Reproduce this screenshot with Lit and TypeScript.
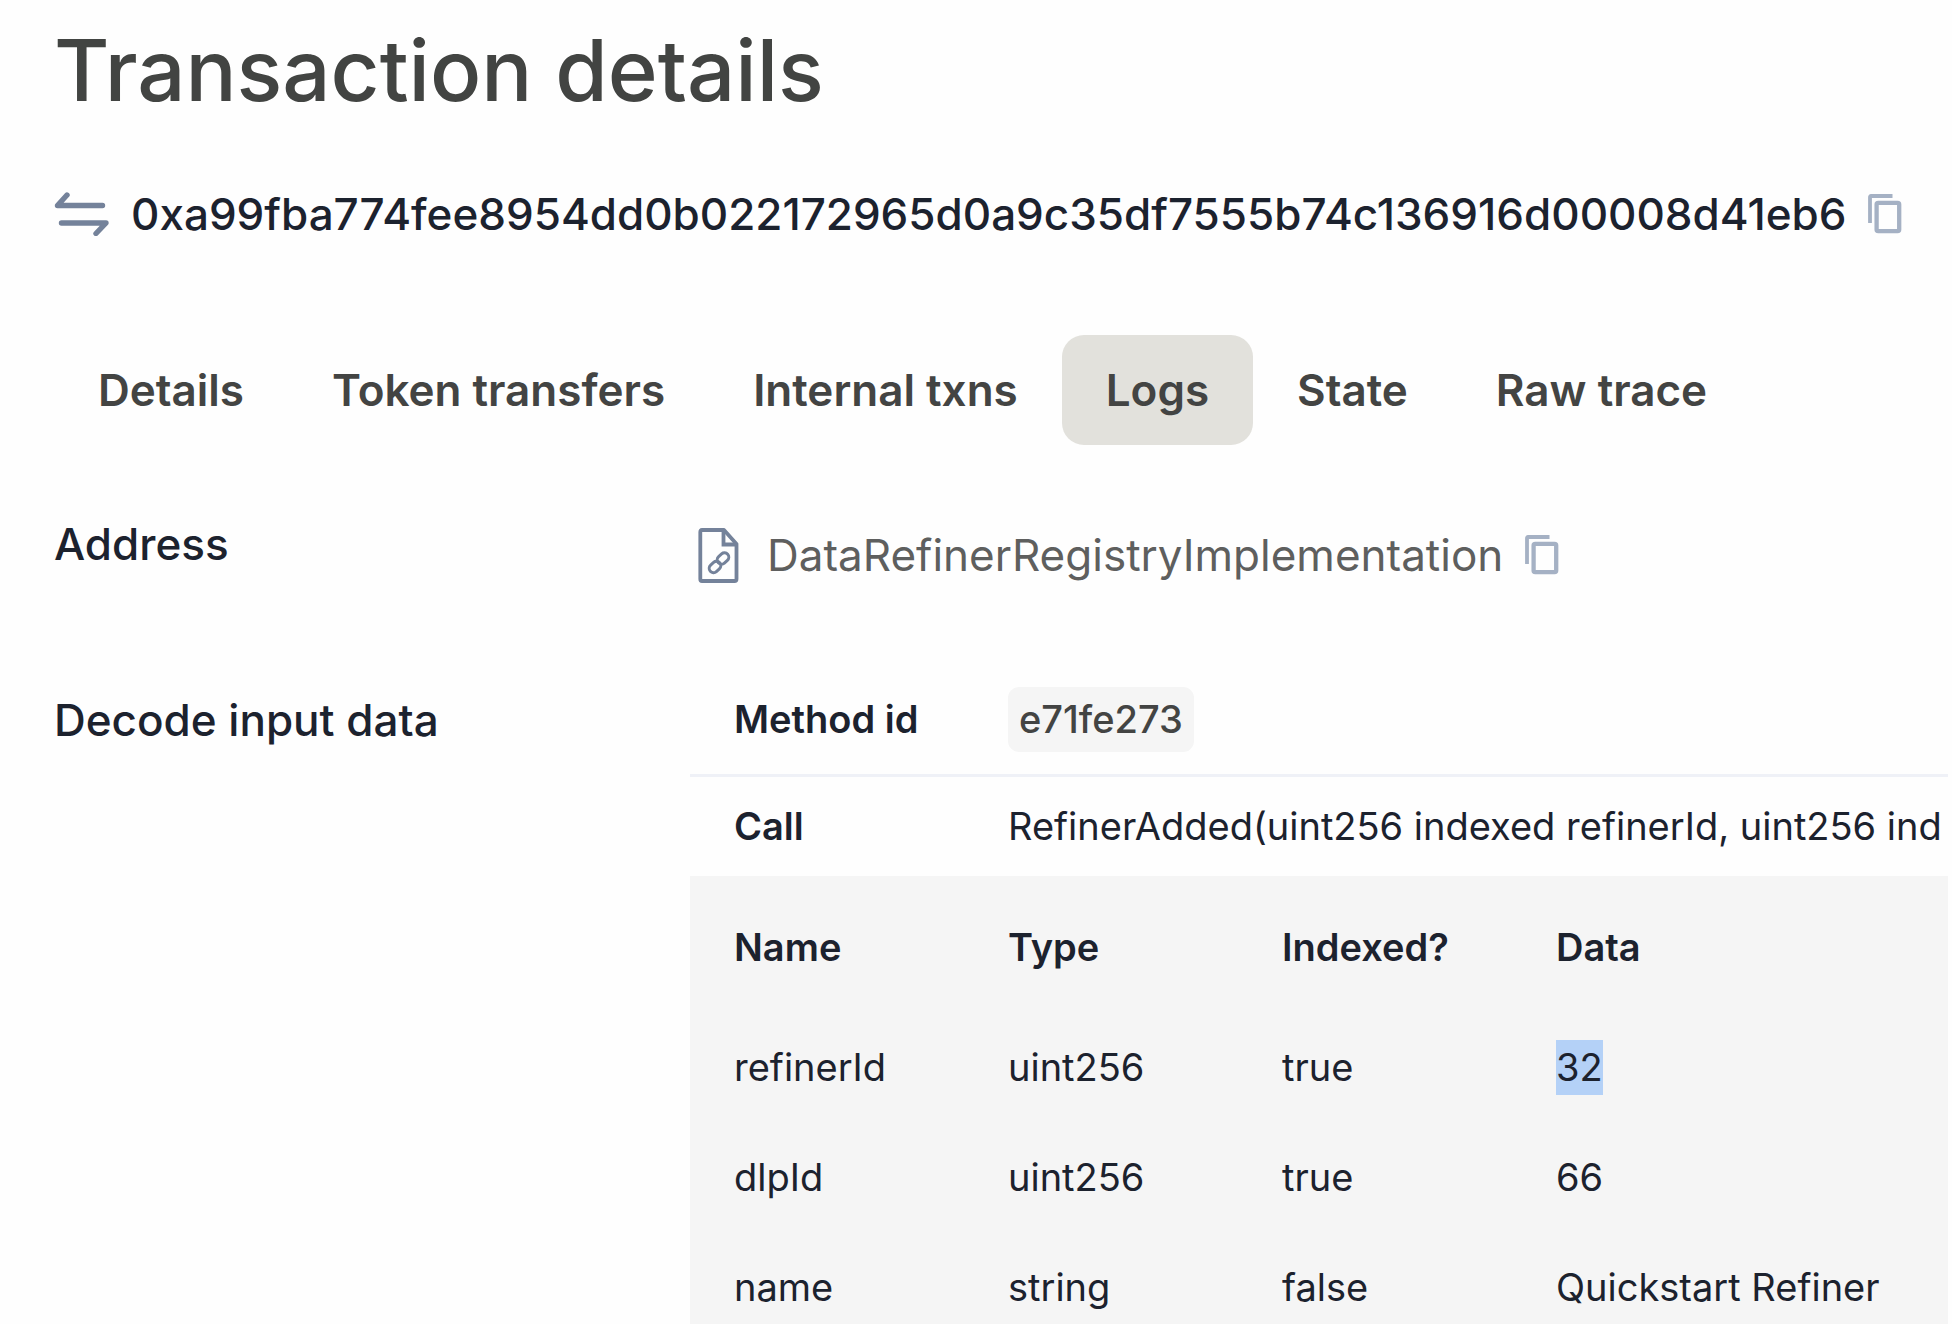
import { LitElement, html, css } from "lit";
import { customElement, state } from "lit/decorators.js";

interface Param {
  name: string;
  type: string;
  indexed: string;
  data: string;
  selected?: boolean;
}

const TABS = ["Details", "Token transfers", "Internal txns", "Logs", "State", "Raw trace"];

const PARAMS: Param[] = [
  { name: "refinerId", type: "uint256", indexed: "true", data: "32", selected: true },
  { name: "dlpId", type: "uint256", indexed: "true", data: "66" },
  { name: "name", type: "string", indexed: "false", data: "Quickstart Refiner" },
];

@customElement("copy-button")
export class CopyButton extends LitElement {
  static styles = css`
    :host { display: flex; flex: none; }
    .copy { display: flex; padding: 0; border: 0; background: none; cursor: pointer; }
    .icon { display: block; width: 34px; height: 40px; }
  `;

  render() {
    return html`<button class="copy" type="button" aria-label="Copy">
      <svg class="icon" viewBox="0 0 34 40" fill="none" stroke="#a5b1c4">
        <path d="M2 29V3Q2 2 3 2H24.500" stroke-width="3.8" />
        <rect x="8.600" y="8.800" width="22.600" height="28.400" rx="1.600" stroke-width="4.3" />
      </svg>
    </button>`;
  }
}

@customElement("app-root")
export class AppRoot extends LitElement {
  @state() private active = "Logs";

  static styles = css`
    :host {
      display: block;
      background: #fefefe;
      color: #1c222e;
      font: 400 44px/66px Inter, "Liberation Sans", sans-serif;
    }
    .page { padding: 16px 4px 0 54px; }
    .title { margin: 0; color: #424442; font-size: 85px; line-height: 110px; font-weight: 500; }
    .hash-row { display: flex; align-items: center; gap: 22px; margin-top: 55px; }
    .hash { font-weight: 500; white-space: nowrap; }
    .swap { display: block; flex: none; width: 55px; height: 44px; }
    .tabs { display: flex; margin-top: 88px; }
    .tab {
      height: 110px;
      padding: 0 44px;
      border: 0;
      border-radius: 22px;
      background: none;
      color: #434443;
      font: inherit;
      font-weight: 600;
      white-space: nowrap;
      cursor: pointer;
    }
    .tab.active { background: #e2e1dc; }
    .details { display: grid; grid-template-columns: 636px minmax(0, 1fr); row-gap: 88px; margin-top: 66px; }
    .label { font-weight: 500; }
    .address { display: flex; align-items: center; gap: 22px; height: 88px; }
    .file { display: block; flex: none; width: 55px; height: 55px; }
    .contract { color: #5e5f5e; text-decoration: none; }
    .decoded { font-size: 38px; line-height: 55px; }
    .line { display: grid; grid-template-columns: 274px minmax(0, 1fr); align-items: center; padding: 22px 0 22px 44px; }
    .method { padding-top: 0; border-bottom: 3px solid #eff1f7; }
    .key { font-weight: 600; }
    .badge {
      justify-self: start;
      padding: 5px 11px;
      border-radius: 11px;
      background: #f5f5f5;
      color: #434443;
      font-weight: 500;
    }
    .call { overflow: hidden; white-space: nowrap; }
    .params { width: 100%; table-layout: fixed; border-collapse: collapse; background: #f5f5f5; }
    .params th, .params td { padding: 27px 0 28px; text-align: left; }
    .params th { padding: 44px 0 38px; font-weight: 600; }
    .params th:first-child, .params td:first-child { width: 274px; padding-left: 44px; }
    .params tr:last-child td { padding-bottom: 10px; }
    .params .col { width: 274px; }
    .selected { display: inline-block; background: #b4d1f7; }
  `;

  render() {
    return html`<main class="page">
      <h1 class="title">Transaction details</h1>
      <div class="hash-row">
        <svg class="swap" viewBox="0 0 55 44" fill="none" stroke="#74829a" stroke-width="5.4" stroke-linecap="round" stroke-linejoin="round" aria-hidden="true">
          <path d="M48.500 13.500H3.500L13 3M7.500 31H52L42 41.500" />
        </svg>
        <span class="hash">0xa99fba774fee8954dd0b022172965d0a9c35df7555b74c136916d00008d41eb6</span>
        <copy-button></copy-button>
      </div>
      <nav class="tabs" role="tablist">
        ${TABS.map(
          (t) => html`<button type="button" role="tab" aria-selected=${t === this.active ? "true" : "false"}
            class="tab ${t === this.active ? "active" : ""}" @click=${() => (this.active = t)}>${t}</button>`
        )}
      </nav>
      <section class="details">
        <div class="label">Address</div>
        <div class="address">
          <svg class="file" viewBox="0 0 55 55" fill="none" stroke="#74829a" aria-hidden="true">
            <path d="M12 2H34L46.500 16V51Q46.500 53 44.500 53H12Q10.300 53 10.300 51V4Q10.300 2 12 2Z" stroke-width="3.8" stroke-linejoin="round" />
            <path d="M33.500 2V16.500H46.500" stroke-width="3.8" />
            <g stroke-width="3">
              <rect x="-6.300" y="-4.300" width="12.600" height="8.600" rx="4.300" transform="translate(33 30.500) rotate(-42)" />
              <rect x="-6.300" y="-4.300" width="12.600" height="8.600" rx="4.300" transform="translate(25 39) rotate(-42)" />
            </g>
          </svg>
          <a class="contract" href="#">DataRefinerRegistryImplementation</a>
          <copy-button></copy-button>
        </div>
        <div class="label">Decode input data</div>
        <div class="decoded">
          <div class="line method"><span class="key">Method id</span><span class="badge">e71fe273</span></div>
          <div class="line"><span class="key">Call</span><span class="call">RefinerAdded(uint256 indexed refinerId, uint256 ind</span></div>
          <table class="params">
            <thead>
              <tr><th>Name</th><th class="col">Type</th><th class="col">Indexed?</th><th>Data</th></tr>
            </thead>
            <tbody>
              ${PARAMS.map(
                (p) => html`<tr>
                  <td>${p.name}</td><td>${p.type}</td><td>${p.indexed}</td>
                  <td>${p.selected ? html`<span class="selected">${p.data}</span>` : p.data}</td>
                </tr>`
              )}
            </tbody>
          </table>
        </div>
      </section>
    </main>`;
  }
}
